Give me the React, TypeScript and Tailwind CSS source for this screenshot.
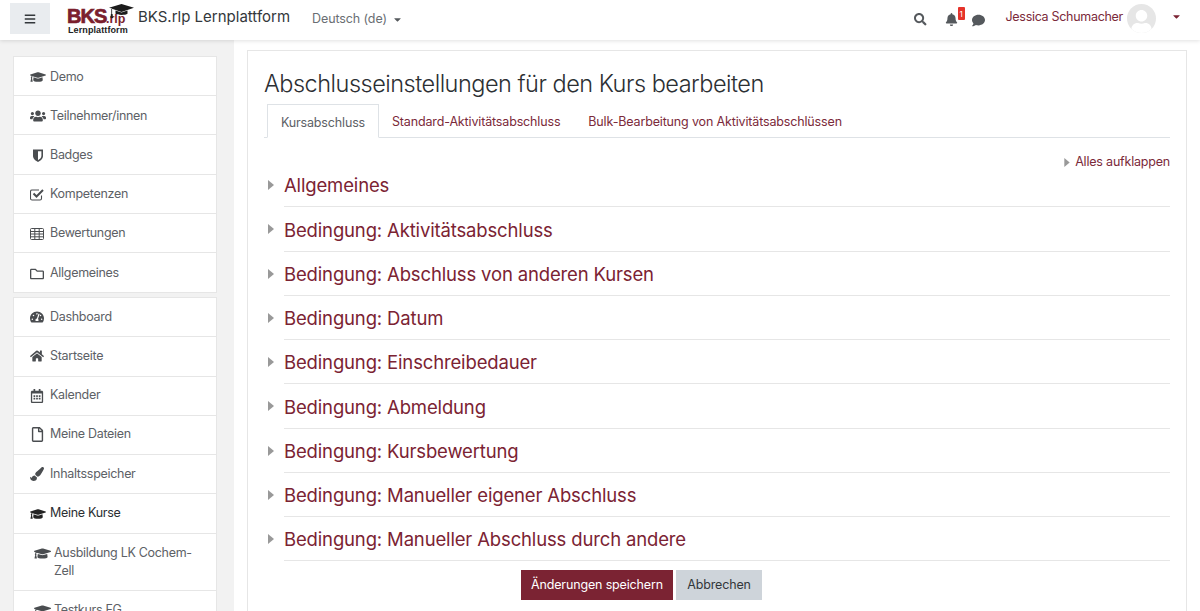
import {
  FaBars,
  FaBell,
  FaCaretDown,
  FaComment,
  FaGraduationCap,
  FaHome,
  FaPaintBrush,
  FaRegCalendarAlt,
  FaRegFile,
  FaRegFolder,
  FaSearch,
  FaTachometerAlt,
  FaUser,
  FaUsers,
} from 'react-icons/fa';
import type { ReactNode } from 'react';

const iconCls = 'text-[#4a4d50]';

function ShieldIcon() {
  return (
    <svg viewBox="0 0 12 13" className="ml-[2px] h-[13px] w-[12px]">
      <path d="M1 .5h10v6.6c0 3-3 4.9-5 5.9-2-1-5-2.900-5-5.900z" fill="#4a4d50" />
      <path d="M6 2.200h3.400v4.900c0 1.900-1.800 3.200-3.400 4.100z" fill="#fff" />
    </svg>
  );
}

function TableIcon() {
  return (
    <svg viewBox="0 0 14 12" className="h-[12px] w-[14px]" fill="none" stroke="#4a4d50" strokeWidth="1">
      <rect x=".5" y=".5" width="13" height="11" rx="1" />
      <path d="M.5 3.500h13M.5 6h13M.5 8.800h13M4.800.5v11M9.200.5v11" />
    </svg>
  );
}

function CheckSquareIcon() {
  return (
    <svg viewBox="0 0 14 13" className="h-[13px] w-[14px]" fill="none" stroke="#4a4d50">
      <path d="M11.500 7.500v3a1.500 1.500 0 0 1-1.500 1.500H2A1.500 1.500 0 0 1 .5 10.500v-7A1.500 1.500 0 0 1 2 2h7" strokeWidth="1.100" />
      <path d="M3.500 5.500L6.500 8.500L13 2" strokeWidth="2" />
    </svg>
  );
}

const courseNav: { label: string; icon: ReactNode }[] = [
  { label: 'Demo', icon: <FaGraduationCap className={`text-[16px] ${iconCls}`} /> },
  { label: 'Teilnehmer/innen', icon: <FaUsers className={`text-[16px] ${iconCls}`} /> },
  { label: 'Badges', icon: <ShieldIcon /> },
  { label: 'Kompetenzen', icon: <CheckSquareIcon /> },
  { label: 'Bewertungen', icon: <TableIcon /> },
  { label: 'Allgemeines', icon: <FaRegFolder className={`text-[14px] ${iconCls}`} /> },
];

const siteNav: { label: string; icon: ReactNode }[] = [
  { label: 'Dashboard', icon: <FaTachometerAlt className={`text-[14px] ${iconCls}`} /> },
  { label: 'Startseite', icon: <FaHome className={`text-[14px] ${iconCls}`} /> },
  { label: 'Kalender', icon: <FaRegCalendarAlt className={`text-[14px] ${iconCls}`} /> },
  { label: 'Meine Dateien', icon: <FaRegFile className={`text-[15px] ${iconCls}`} /> },
  { label: 'Inhaltsspeicher', icon: <FaPaintBrush className={`text-[14px] ${iconCls}`} /> },
];

const sections = [
  'Allgemeines',
  'Bedingung: Aktivitätsabschluss',
  'Bedingung: Abschluss von anderen Kursen',
  'Bedingung: Datum',
  'Bedingung: Einschreibedauer',
  'Bedingung: Abmeldung',
  'Bedingung: Kursbewertung',
  'Bedingung: Manueller eigener Abschluss',
  'Bedingung: Manueller Abschluss durch andere',
];

function Caret({ className }: { className: string }) {
  return (
    <svg viewBox="0 0 6 10" className={className}>
      <path d="M0 0l6 5-6 5z" fill="#999" />
    </svg>
  );
}

function NavRow({ label, icon, dark, shift }: { label: string; icon: ReactNode; dark?: boolean; shift?: boolean }) {
  return (
    <div
      className={`flex h-[39.2px] items-center border-b border-[#e6e6e6] pl-[16px] text-[12.5px] tracking-[-0.3px] last:border-b-0 ${
        shift ? 'pt-[2px]' : ''
      }`}
    >
      <span className="flex w-[20px] shrink-0 items-center">{icon}</span>
      <span className={dark ? 'text-[#2c2f33]' : 'text-[#5d6166]'}>{label}</span>
    </div>
  );
}

function SubCourse({ label, className }: { label: string; className: string }) {
  return (
    <div className={`flex items-start pl-[20px] pt-[10px] text-[12.5px] leading-[18px] tracking-[-0.3px] text-[#5d6166] ${className}`}>
      <FaGraduationCap className="mt-[1px] w-[20px] shrink-0 pr-[3px] text-[17px] text-[#4a4d50]" />
      <span className="w-[150px]">{label}</span>
    </div>
  );
}

function Logo() {
  return (
    <div className="relative mb-[3px] ml-[16px] h-[32px] w-[70px] shrink-0 font-['Liberation_Sans',sans-serif] font-bold leading-none">
      <span className="absolute left-[1px] top-[3px] text-[20px] tracking-[-1px] text-[#7b1f2e] [-webkit-text-stroke:0.7px_#7b1f2e]">
        BKS
      </span>
      <span className="absolute left-[40px] top-[10px] text-[12.5px] text-[#7b1f2e]">.rlp</span>
      <span className="absolute left-[2px] top-[23px] text-[9px] tracking-[0.1px] text-[#222]">Lernplattform</span>
      <svg viewBox="0 0 26 14" className="absolute left-[43px] top-[1px] h-[14px] w-[26px]">
        <path d="M12.500 0L25 3.800 12.500 8 3 4.800 3 4 2 4.200 0 3.800z" fill="#1c1c1c" />
        <path d="M6.500 6.500v3.200c2 1.600 10 1.600 12 0V6.500l-6 2z" fill="#1c1c1c" />
        <path d="M2.300 4.500h.8v5.500h.5l.4 4h-2.500l.4-4h.4z" fill="#1c1c1c" />
      </svg>
    </div>
  );
}

function Header() {
  return (
    <header className="relative z-10 flex h-[40px] shrink-0 items-center bg-white pl-[10px] pr-[18px] shadow-[0_1px_4px_rgba(0,0,0,0.12)]">
      <button className="mb-[3px] flex h-[31px] w-[40px] items-center justify-center bg-[#e9ecef] text-[#33373b]">
        <FaBars className="text-[12px]" />
      </button>
      <Logo />
      <span className="mb-[6px] ml-[2px] text-[15px] text-[#33373b]">BKS.rlp Lernplattform</span>
      <span className="mb-[2px] ml-[22px] flex items-center text-[12.5px] tracking-[-0.1px] text-[#6a6e73]">
        Deutsch (de)
        <FaCaretDown className="ml-[5px] text-[11px] text-[#55595d]" />
      </span>
      <div className="mb-[3px] ml-auto flex items-center">
        <FaSearch className="mt-[2px] text-[12.5px] text-[#55595d]" />
        <span className="relative ml-[18px] mt-[2px] flex">
          <FaBell className="text-[13px] text-[#55595d]" />
          <span className="absolute left-[13px] top-[-6px] flex h-[13px] w-[7px] items-center justify-center rounded-[1px] bg-[#e5332a] text-[8px] text-white">
            1
          </span>
        </span>
        <FaComment className="ml-[14px] mt-[4px] text-[13px] text-[#55595d]" />
        <span className="mb-[3px] ml-[21px] text-[12.5px] tracking-[-0.3px] text-[#7b2a3a]">Jessica Schumacher</span>
        <span className="ml-[4px] flex h-[29px] w-[29px] items-end justify-center overflow-hidden rounded-full bg-[#e6e6e6]">
          <FaUser className="text-[23px] text-white" />
        </span>
        <FaCaretDown className="mb-[4px] ml-[15px] text-[11px] text-[#7b2333]" />
      </div>
    </header>
  );
}

function Sidebar() {
  return (
    <aside className="w-[234px] shrink-0 bg-[#f2f2f2] pl-[13px] pr-[17px] pt-[16px]">
      <div className="border border-[#e6e6e6] bg-white">
        {courseNav.map((item) => (
          <NavRow key={item.label} {...item} shift />
        ))}
      </div>
      <div className="mt-[4px] border border-[#e6e6e6] bg-white">
        {siteNav.map((item) => (
          <NavRow key={item.label} {...item} />
        ))}
        <div className="border-b border-[#e6e6e6]">
          <NavRow label="Meine Kurse" icon={<FaGraduationCap className="text-[16px] text-[#222]" />} dark />
        </div>
        <SubCourse label="Ausbildung LK Cochem-Zell" className="h-[57px] border-b border-[#e6e6e6]" />
        <SubCourse label="Testkurs FG" className="h-[39px]" />
      </div>
    </aside>
  );
}

export default function App() {
  return (
    <div className="flex h-[611px] flex-col overflow-hidden bg-white font-['Inter',sans-serif]">
      <Header />
      <div className="flex min-h-0 flex-1">
        <Sidebar />
        <main className="min-w-0 flex-1 pl-[13px] pr-[13px] pt-[10px]">
          <div className="h-[620px] border border-[#e6e6e6] bg-white pl-[16px] pr-[16px] pt-[19px]">
            <h1 className="text-[23.5px] font-light leading-[28px] tracking-[-0.5px] text-[#2c2f33]">
              Abschlusseinstellungen für den Kurs bearbeiten
            </h1>
            <nav className="mt-[7px] flex h-[33px] items-end border-b border-[#dee2e6] pl-[3px] text-[12.5px] tracking-[-0.15px]">
              <span className="mb-[-1px] flex h-[34px] w-[112px] items-center justify-center border border-[#dee2e6] border-b-white bg-white pt-[4px] text-[#5d6166]">
                Kursabschluss
              </span>
              <span className="flex h-[33px] items-center pl-[13px] pt-[4px] text-[#7b2a3a]">Standard-Aktivitätsabschluss</span>
              <span className="flex h-[33px] items-center pl-[28px] pt-[4px] text-[#7b2a3a]">
                Bulk-Bearbeitung von Aktivitätsabschlüssen
              </span>
            </nav>
            <div className="mt-[15px] flex items-center justify-end text-[12.5px] leading-[18px] tracking-[-0.2px] text-[#7b2a3a]">
              <Caret className="mr-[5px] h-[9px] w-[6px]" />
              Alles aufklappen
            </div>
            <div className="-mt-[8px]">
              {sections.map((title) => (
                <section key={title} className="flex h-[44.25px] items-center">
                  <span className="flex w-[20px] shrink-0 items-center pl-[4px]">
                    <Caret className="h-[10px] w-[6px]" />
                  </span>
                  <h3 className="flex h-[44.25px] flex-1 items-center border-b border-[#e6e6e6] pt-[3px] text-[18.5px] font-normal tracking-[-0.15px] text-[#7b2333]">
                    {title}
                  </h3>
                </section>
              ))}
            </div>
            <div className="mt-[9px] flex pl-[257px] text-[12.5px] tracking-[-0.15px]">
              <button className="h-[30px] w-[152px] bg-[#7b2333] text-white">Änderungen speichern</button>
              <button className="ml-[3px] h-[30px] w-[86px] bg-[#ced4da] text-[#33373b]">Abbrechen</button>
            </div>
          </div>
        </main>
      </div>
    </div>
  );
}
